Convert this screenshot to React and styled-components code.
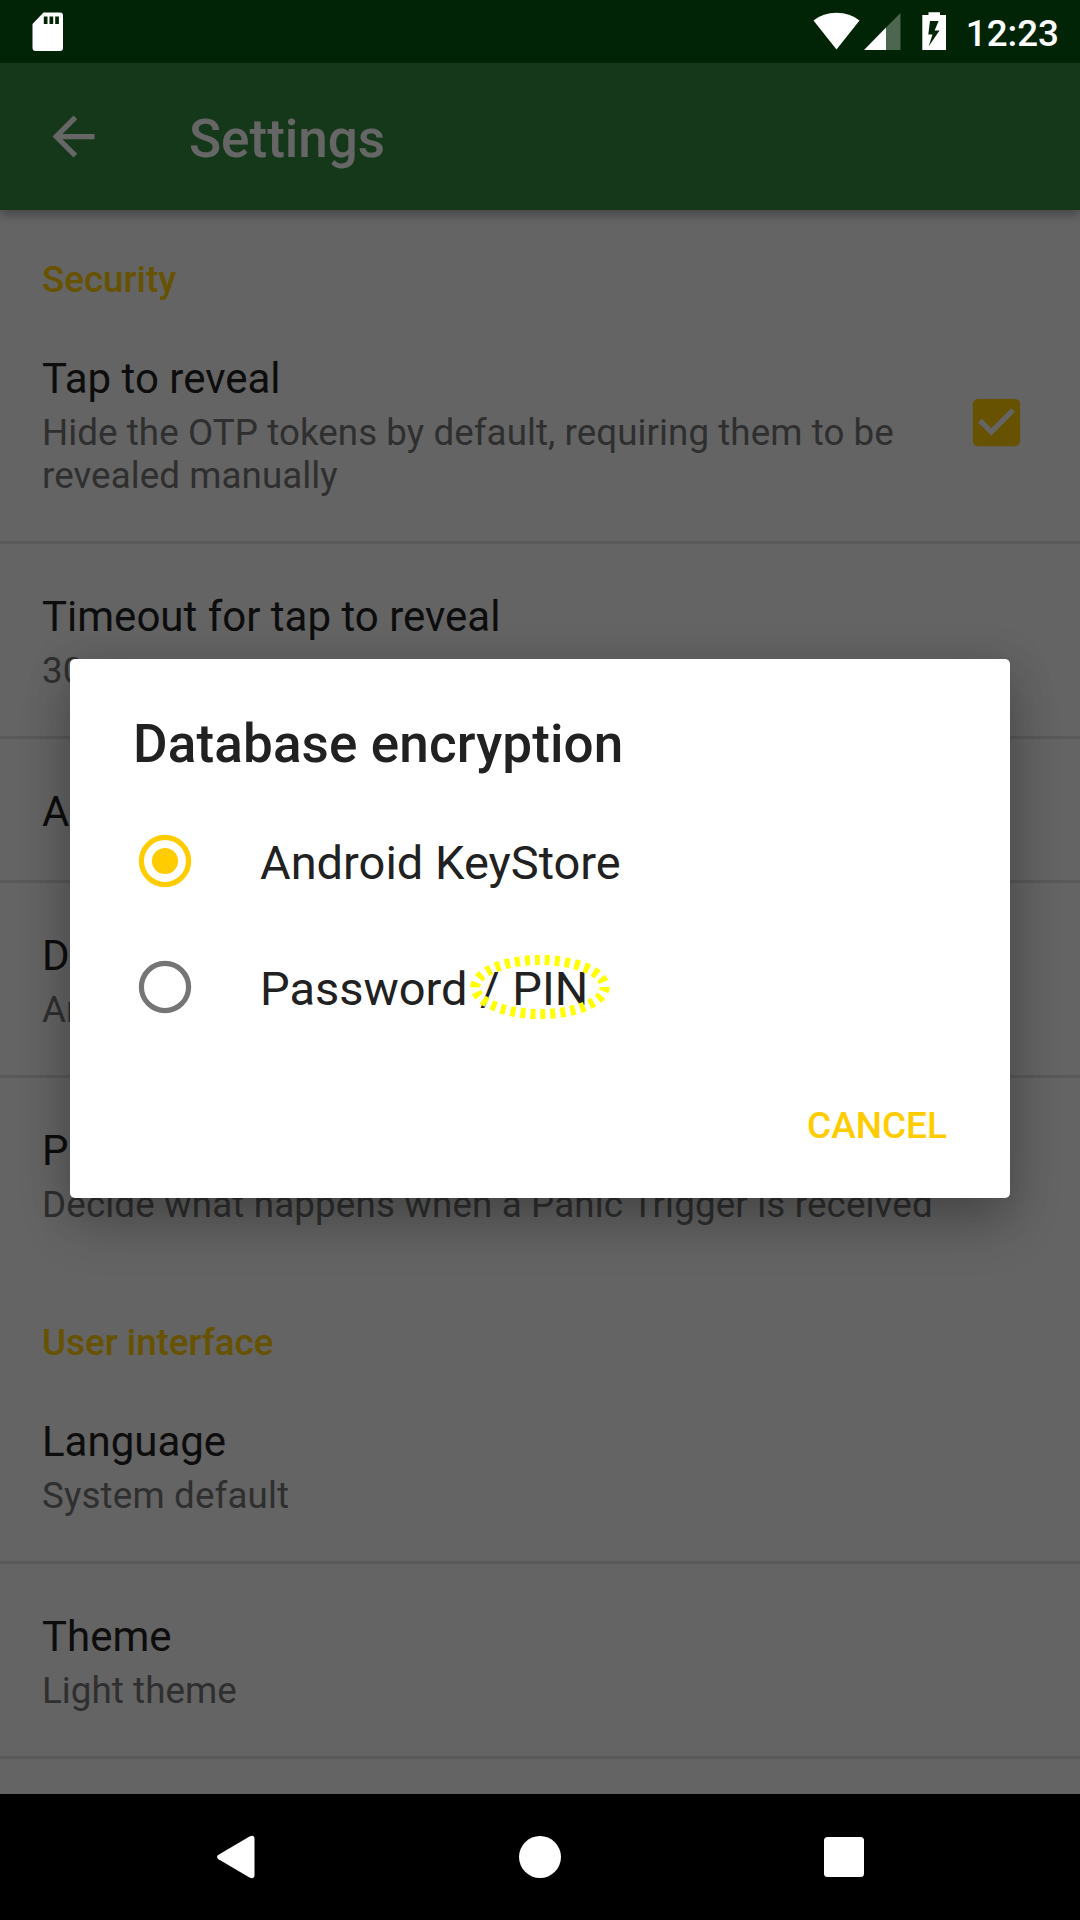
import React from "react";
import styled, { createGlobalStyle } from "styled-components";

const GlobalStyle = createGlobalStyle`
  * { box-sizing: border-box; }
  body { margin: 0; font-family: Roboto, "Liberation Sans", sans-serif; }
`;

const Screen = styled.div`
  display: flex;
  flex-direction: column;
  width: 1080px;
  height: 1920px;
  overflow: hidden;
  background: #000;
`;

const StatusBar = styled.header`
  flex: none;
  display: flex;
  justify-content: space-between;
  height: 63px;
  padding: 0 21px 0 32px;
  background: #002405;
`;

const StatusGroup = styled.div`
  display: flex;
  align-items: center;
`;

const StatusIcon = styled.svg`
  display: block;
  width: ${(p) => p.$w}px;
  height: 63px;
  margin-right: ${(p) => p.$gap || 0}px;
`;

const Clock = styled.span`
  display: flex;
  justify-content: flex-end;
  width: 92px;
  font-size: 36.75px;
  font-weight: 500;
  line-height: 43px;
  color: #fff;
  margin-top: 3px;
`;

const Activity = styled.main`
  position: relative;
  flex: 1;
  display: flex;
  flex-direction: column;
  overflow: hidden;
  background: #fafafa;
`;

const AppBar = styled.div`
  flex: none;
  z-index: 1;
  display: flex;
  align-items: center;
  gap: 84px;
  height: 147px;
  padding: 0 42px;
  background: #398d41;
  box-shadow: 0 5px 10px rgba(0, 0, 0, 0.3);
`;

const BackIcon = styled.svg`
  width: 63px;
  height: 63px;
  fill: #fff;
`;

const AppTitle = styled.h1`
  margin: 4px 0 0;
  font-size: 53px;
  font-weight: 500;
  line-height: 62px;
  color: #fff;
`;

const Category = styled.h2`
  height: 96px;
  margin: 0;
  padding: 48px 42px 0;
  font-size: 36.75px;
  font-weight: 500;
  line-height: 43px;
  color: #fc0;
`;

const Row = styled.div`
  display: flex;
  align-items: center;
  justify-content: space-between;
  padding: 48px 52px 50px 42px;
  height: ${(p) => p.$height}px;
  border-bottom: ${(p) => (p.$last ? "0" : "3px solid #dedede")};
`;

const RowText = styled.div`
  align-self: flex-start;
`;

const RowTitle = styled.div`
  font-size: 42px;
  line-height: 49px;
  color: #212121;
`;

const RowSummary = styled.div`
  margin-top: 8px;
  font-size: 36.75px;
  line-height: 43px;
  letter-spacing: ${(p) => p.$tracking}px;
  color: #757575;
  white-space: pre;
`;

const CheckIcon = styled.svg`
  flex: none;
  width: 63px;
  height: 63px;
  fill: #fc0;
`;

const Scrim = styled.div`
  position: absolute;
  inset: 0;
  z-index: 2;
  display: flex;
  align-items: center;
  justify-content: center;
  background: rgba(0, 0, 0, 0.6);
`;

const Dialog = styled.section`
  display: flex;
  flex-direction: column;
  width: 940px;
  height: 539px;
  padding: 54px 63px 0;
  border-radius: 5px;
  background: #fff;
  box-shadow: 0 28px 52px rgba(0, 0, 0, 0.2), 0 6px 46px rgba(0, 0, 0, 0.16);
`;

const DialogTitle = styled.h2`
  margin: 0 0 23px;
  font-size: 53px;
  font-weight: 500;
  line-height: 62px;
  letter-spacing: 0.14px;
  color: #212121;
`;

const Option = styled.label`
  display: flex;
  align-items: center;
  gap: 63px;
  height: 126px;
  font-size: 47px;
  line-height: 56px;
  color: #212121;
`;

const Radio = styled.svg`
  width: 64px;
  height: 64px;
  color: ${(p) => (p.$checked ? "#fc0" : "#757575")};
`;

const OptionLabel = styled.span`
  margin-top: 3px;
`;

const Circled = styled.span`
  position: relative;
  margin-left: 1px;
  word-spacing: 1px;
`;

const Highlight = styled.svg`
  position: absolute;
  left: -10px;
  top: -7px;
  width: 140px;
  height: 66px;
`;

const Actions = styled.div`
  display: flex;
  justify-content: flex-end;
  margin-top: 54px;
`;

const TextButton = styled.button`
  padding: 0;
  border: 0;
  background: none;
  font: 500 37px/43px Roboto, "Liberation Sans", sans-serif;
  color: #fc0;
`;

const NavBar = styled.nav`
  flex: none;
  display: flex;
  justify-content: center;
  align-items: center;
  gap: 240px;
  height: 126px;
  background: #000;
`;

const NavIcon = styled.svg`
  width: 64px;
  height: 64px;
  fill: #fff;
`;

function Preference({ title, summary, height = 195, tracking = 0.14, checked, last }) {
  return (
    <Row $height={height} $last={last}>
      <RowText>
        <RowTitle>{title}</RowTitle>
        {summary && <RowSummary $tracking={tracking}>{summary}</RowSummary>}
      </RowText>
      {checked && (
        <CheckIcon viewBox="0 0 24 24">
          <path d="M19 3H5c-1.110 0-2 .9-2 2v14c0 1.100.89 2 2 2h14c1.110 0 2-.9 2-2V5c0-1.100-.89-2-2-2zm-9 14l-5-5 1.410-1.410L10 14.170l7.590-7.590L19 8l-9 9z" />
        </CheckIcon>
      )}
    </Row>
  );
}

function RadioMark({ checked }) {
  return (
    <Radio $checked={checked} viewBox="0 0 64 64">
      <circle cx="32" cy="32" r="23.6" fill="none" stroke="currentColor" strokeWidth="5.2" />
      {checked && <circle cx="32" cy="32" r="13.100" fill="currentColor" />}
    </Radio>
  );
}

export default function App() {
  return (
    <Screen>
      <GlobalStyle />
      <StatusBar>
        <StatusGroup>
          <StatusIcon $w={32} viewBox="0 0 32 63">
            <path
              fill="#fff"
              fillRule="evenodd"
              d="M11.500 12.500H28a3 3 0 0 1 3 3V48a3 3 0 0 1-3 3H3.500a3 3 0 0 1-3-3V24zM11.800 16.500v7.500h3.700v-7.500zM17.500 16.500v7.500h3.700v-7.500zM23.200 16.500v7.500h3.700v-7.500z"
            />
          </StatusIcon>
        </StatusGroup>
        <StatusGroup>
          <StatusIcon $w={47} $gap={4} viewBox="0 0 47 63">
            <path fill="#fff" d="M0.500 20.500Q10 12.800 23.500 12.800T46.500 20.500L23.500 49.500z" />
          </StatusIcon>
          <StatusIcon $w={37} $gap={21} viewBox="0 0 37 63">
            <path fill="#fff" fillOpacity=".3" d="M22 27.500L36.500 13v37H22z" />
            <path fill="#fff" d="M0 50L22 27.500V50z" />
          </StatusIcon>
          <StatusIcon $w={25} $gap={20} viewBox="0 0 25 63">
            <path
              fill="#fff"
              fillRule="evenodd"
              d="M6.500 12.300h11.500v2.700h6v35H.3V15h6.200zM8 21L6.300 34.500h4.200L6.600 46.500 17.500 30.500H12.600L16.600 21z"
            />
          </StatusIcon>
          <Clock>12:23</Clock>
        </StatusGroup>
      </StatusBar>

      <Activity>
        <AppBar>
          <BackIcon viewBox="0 0 24 24">
            <path d="M20 11H7.830l5.590-5.590L12 4l-8 8 8 8 1.410-1.410L7.830 13H20v-2z" />
          </BackIcon>
          <AppTitle>Settings</AppTitle>
        </AppBar>

        <Category>Security</Category>
        <Preference
          title="Tap to reveal"
          summary={"Hide the OTP tokens by default, requiring them to be\nrevealed manually"}
          height={238}
          tracking={0.06}
          checked
        />
        <Preference title="Timeout for tap to reveal" summary="30" />
        <Preference title="Authentication" height={144} />
        <Preference title="Database encryption" summary="Android KeyStore" />
        <Preference
          title="Panic Trigger"
          summary="Decide what happens when a Panic Trigger is received"
          last
        />
        <Category>User interface</Category>
        <Preference title="Language" summary="System default" />
        <Preference title="Theme" summary="Light theme" tracking={0.06} />

        <Scrim>
          <Dialog role="dialog">
            <DialogTitle>Database encryption</DialogTitle>
            <Option>
              <RadioMark checked />
              <OptionLabel>Android KeyStore</OptionLabel>
            </Option>
            <Option>
              <RadioMark />
              <OptionLabel>
                Password{" "}
                <Circled>
                  / PIN
                  <Highlight viewBox="0 0 140 66">
                    <ellipse
                      cx="70"
                      cy="33"
                      rx="64.700"
                      ry="27"
                      fill="none"
                      stroke="#ff0"
                      strokeWidth="10"
                      strokeDasharray="5 5.010"
                      strokeDashoffset="0.5"
                    />
                  </Highlight>
                </Circled>
              </OptionLabel>
            </Option>
            <Actions>
              <TextButton>CANCEL</TextButton>
            </Actions>
          </Dialog>
        </Scrim>
      </Activity>

      <NavBar>
        <NavIcon viewBox="0 0 64 64">
          <path d="M14.500 29.800L45.500 11.400Q50.500 9.500 50.500 14V50Q50.500 54.500 45.500 52.600L14.500 34.200Q11.500 32 14.500 29.800z" />
        </NavIcon>
        <NavIcon viewBox="0 0 64 64">
          <circle cx="32" cy="32" r="21" />
        </NavIcon>
        <NavIcon viewBox="0 0 64 64">
          <rect x="12" y="12" width="40" height="40" rx="3.500" />
        </NavIcon>
      </NavBar>
    </Screen>
  );
}
